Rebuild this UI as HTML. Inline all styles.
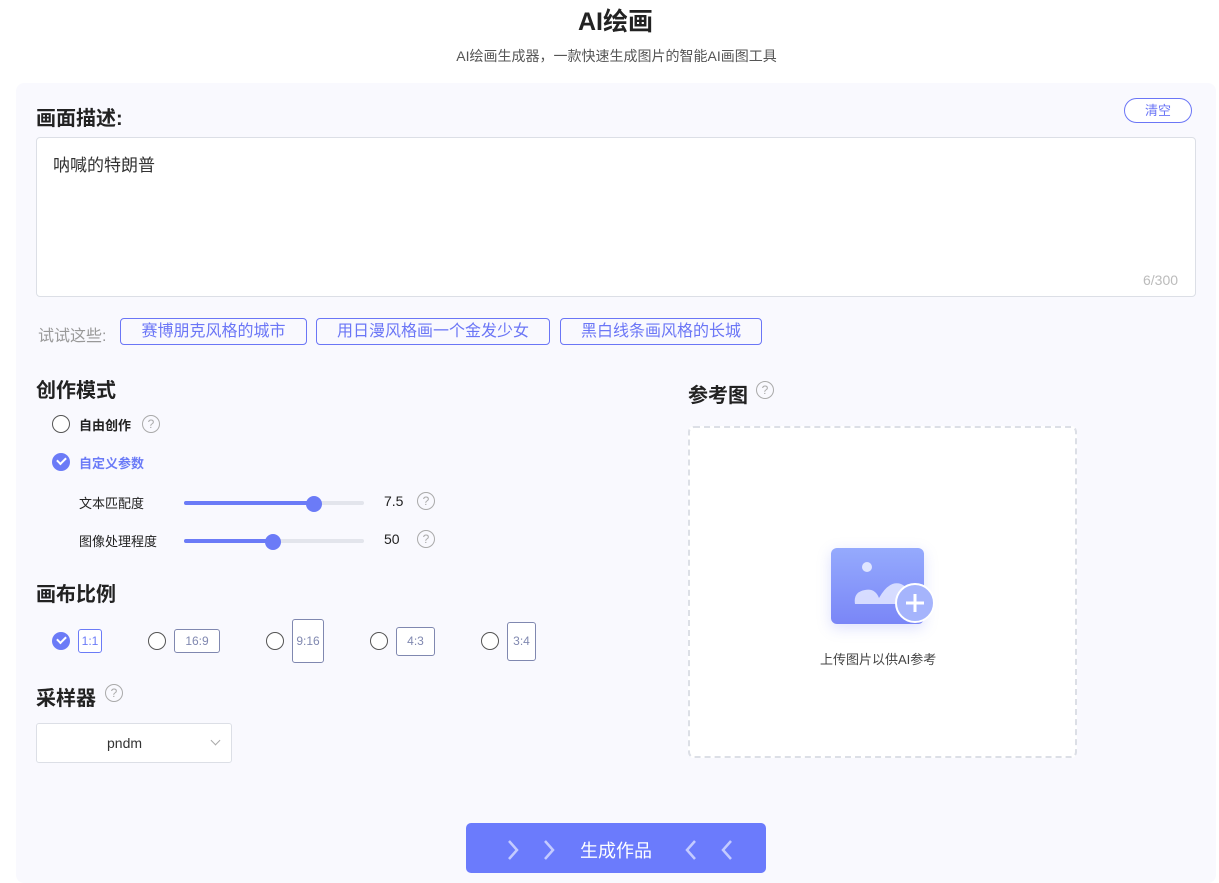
<!DOCTYPE html>
<html><head><meta charset="utf-8"><style>
*{box-sizing:border-box;margin:0;padding:0}
body{width:1219px;height:863px;overflow:hidden;background:#fff;font-family:"Liberation Sans","Noto Sans CJK SC",sans-serif;color:#222;position:relative}
.a{position:absolute}
.panel{left:16px;top:83px;width:1200px;height:800px;background:#f9f9fe;border-radius:8px}
h2{font-size:20px;font-weight:bold;color:#222}
.tag{border:1px solid #6b76f6;color:#6b76f6;border-radius:4px;font-size:16px;height:27px;line-height:25px;padding:0 20px}
.radio{width:18px;height:18px;border:1px solid #555;border-radius:50%;background:#fff}
.chk{width:18px;height:18px;border-radius:50%;background:#6b7bf7}
.chk:after{content:"";position:absolute;left:5px;top:4px;width:7px;height:4px;border-left:2px solid #fff;border-bottom:2px solid #fff;transform:rotate(-45deg)}
.q{width:18px;height:18px;border:1px solid #aaa;border-radius:50%;color:#aaa;font-size:12px;text-align:center;line-height:16px}
.ratio{border:1px solid #8088b0;border-radius:3px;color:#8088b0;font-size:12px;text-align:center;background:#fff}
.track{height:4px;background:#e3e5ec;border-radius:2px;width:180px}
.fill{height:4px;background:#6b7bf7;border-radius:2px}
.knob{width:16px;height:16px;border-radius:50%;background:#6b7bf7}
</style></head><body>
<div class="a" style="left:0;width:1231px;top:2px;text-align:center;font-size:25px;font-weight:bold;color:#222">AI绘画</div>
<div class="a" style="left:0;width:1233px;top:46px;text-align:center;font-size:14px;color:#555">AI绘画生成器，一款快速生成图片的智能AI画图工具</div>
<div class="a panel"></div>
<h2 class="a" style="left:36px;top:102px">画面描述:</h2>
<div class="a" style="left:1124px;top:98px;width:68px;height:25px;border:1px solid #6b76f6;border-radius:13px;color:#6b76f6;font-size:13px;text-align:center;line-height:23px;background:#fff">清空</div>
<div class="a" style="left:36px;top:137px;width:1160px;height:160px;background:#fff;border:1px solid #dcdfe6;border-radius:4px"></div>
<div class="a" style="left:53px;top:151px;font-size:17px;color:#333">呐喊的特朗普</div>
<div class="a" style="left:1143px;top:272px;font-size:14px;color:#bbb">6/300</div>
<div class="a" style="left:38px;top:322px;font-size:16px;color:#999">试试这些:</div>
<div class="a tag" style="left:120px;top:318px;width:187px;text-align:center;padding:0">赛博朋克风格的城市</div>
<div class="a tag" style="left:316px;top:318px;width:234px;text-align:center;padding:0">用日漫风格画一个金发少女</div>
<div class="a tag" style="left:560px;top:318px;width:202px;text-align:center;padding:0">黑白线条画风格的长城</div>
<h2 class="a" style="left:36px;top:374px">创作模式</h2>
<div class="a radio" style="left:52px;top:415px"></div>
<div class="a" style="left:79px;top:415px;font-size:13px;font-weight:bold">自由创作</div>
<div class="a q" style="left:142px;top:415px">?</div>
<div class="a chk" style="left:52px;top:453px"></div>
<div class="a" style="left:79px;top:453px;font-size:13px;font-weight:bold;color:#6b7bf7">自定义参数</div>
<div class="a" style="left:79px;top:493px;font-size:13px">文本匹配度</div>
<div class="a track" style="left:184px;top:501px"><div class="fill" style="width:130px"></div></div>
<div class="a knob" style="left:306px;top:496px"></div>
<div class="a" style="left:384px;top:493px;font-size:14px">7.5</div>
<div class="a q" style="left:417px;top:492px">?</div>
<div class="a" style="left:79px;top:531px;font-size:13px">图像处理程度</div>
<div class="a track" style="left:184px;top:539px"><div class="fill" style="width:89px"></div></div>
<div class="a knob" style="left:265px;top:534px"></div>
<div class="a" style="left:384px;top:531px;font-size:14px">50</div>
<div class="a q" style="left:417px;top:530px">?</div>
<h2 class="a" style="left:36px;top:578px">画布比例</h2>
<div class="a chk" style="left:52px;top:632px"></div>
<div class="a ratio" style="left:78px;top:629px;width:24px;height:24px;line-height:22px;border-color:#6b7bf7;color:#6b7bf7">1:1</div>
<div class="a radio" style="left:148px;top:632px"></div>
<div class="a ratio" style="left:174px;top:629px;width:46px;height:24px;line-height:22px">16:9</div>
<div class="a radio" style="left:266px;top:632px"></div>
<div class="a ratio" style="left:292px;top:619px;width:32px;height:44px;line-height:42px">9:16</div>
<div class="a radio" style="left:370px;top:632px"></div>
<div class="a ratio" style="left:396px;top:627px;width:39px;height:29px;line-height:27px">4:3</div>
<div class="a radio" style="left:481px;top:632px"></div>
<div class="a ratio" style="left:507px;top:622px;width:29px;height:39px;line-height:37px">3:4</div>
<h2 class="a" style="left:36px;top:682px">采样器</h2>
<div class="a q" style="left:105px;top:684px">?</div>
<div class="a" style="left:36px;top:723px;width:196px;height:40px;background:#fff;border:1px solid #dcdfe6;border-radius:3px;font-size:14px;line-height:38px;padding-left:70px;color:#333">pndm<span style="position:absolute;right:12px;top:13px;width:7px;height:7px;border-right:1px solid #aaa;border-bottom:1px solid #aaa;transform:rotate(45deg)"></span></div>
<h2 class="a" style="left:688px;top:379px">参考图</h2>
<div class="a q" style="left:756px;top:381px">?</div>
<div class="a" style="left:688px;top:426px;width:389px;height:332px;background:#fff;border:2px dashed #dcdfe6;border-radius:6px"></div>
<div class="a" style="left:831px;top:548px;width:93px;height:76px;border-radius:6px;background:linear-gradient(#95aafd,#7a86f7);box-shadow:0 4px 14px rgba(120,130,250,.25)"></div>
<svg class="a" style="left:831px;top:548px" width="110" height="80"><circle cx="36" cy="19" r="5" fill="#dfe5ff"/><path d="M24 56 Q22 44 34 42 Q44 40 48 50 Q58 32 70 36 Q80 40 78 56 Z" fill="#dfe3ff" opacity=".9"/><circle cx="84" cy="55" r="19" fill="#a5b4fc" stroke="#fff" stroke-width="2"/><path d="M84 46v18M75 55h18" stroke="#fff" stroke-width="3"/></svg>
<div class="a" style="left:820px;top:649px;font-size:13px;color:#444">上传图片以供AI参考</div>
<div class="a" style="left:466px;top:823px;width:300px;height:50px;background:#6b7bfc;border-radius:5px;color:#fff;font-size:18px;text-align:center;line-height:56px">生成作品</div>
<svg class="a" style="left:466px;top:823px" width="300" height="40"><g fill="none" stroke="#c4cbff" stroke-width="2.5"><path d="M43 18l8 9-8 9M79 18l8 9-8 9M229 18l-8 9 8 9M265 18l-8 9 8 9"/></g></svg>
</body></html>
